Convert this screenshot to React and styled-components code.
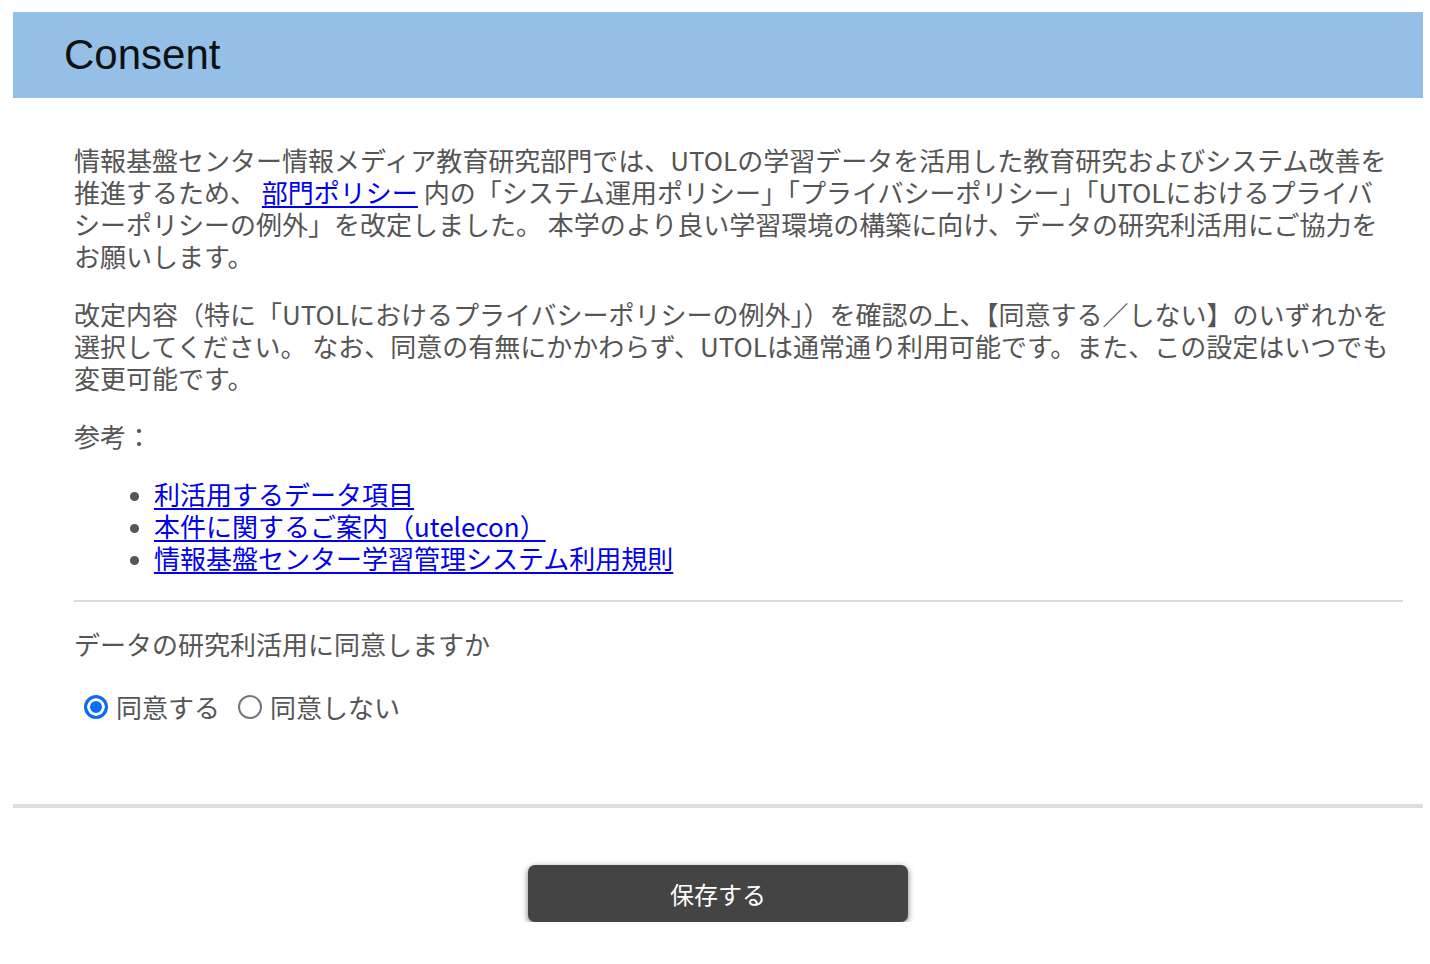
import { useState } from "react";
import styled, { createGlobalStyle } from "styled-components";

const GlobalStyle = createGlobalStyle`
  body {
    margin: 0;
    background: #fff;
    font-family: "Noto Sans CJK JP", "Noto Sans", sans-serif;
  }
`;

const links = [
  "利活用するデータ項目",
  "本件に関するご案内（utelecon）",
  "情報基盤センター学習管理システム利用規則",
];

export default function App() {
  const [agree, setAgree] = useState("yes");

  return (
    <>
      <GlobalStyle />
      <Page>
        <Header>
          <Title>Consent</Title>
        </Header>
        <Content>
          <Para>
            情報基盤センター情報メディア教育研究部門では、UTOLの学習データを活用した教育研究およびシステム改善を推進するため、{" "}
            <Link href="#">部門ポリシー</Link>{" "}
            内の「システム運用ポリシー」「プライバシーポリシー」「UTOLにおけるプライバシーポリシーの例外」を改定しました。
            本学のより良い学習環境の構築に向け、データの研究利活用にご協力をお願いします。
          </Para>
          <Para>
            改定内容（特に「UTOLにおけるプライバシーポリシーの例外」）を確認の上、【同意する／しない】のいずれかを選択してください。
            なお、同意の有無にかかわらず、UTOLは通常通り利用可能です。また、この設定はいつでも変更可能です。
          </Para>
          <Para>参考：</Para>
          <LinkList>
            {links.map((t) => (
              <li key={t}>
                <Link href="#">{t}</Link>
              </li>
            ))}
          </LinkList>
          <Rule />
          <Question>データの研究利活用に同意しますか</Question>
          <RadioRow>
            <Choice>
              <Radio
                type="radio"
                name="agree"
                checked={agree === "yes"}
                onChange={() => setAgree("yes")}
              />
              同意する
            </Choice>
            <Choice>
              <Radio
                type="radio"
                name="agree"
                checked={agree === "no"}
                onChange={() => setAgree("no")}
              />
              同意しない
            </Choice>
          </RadioRow>
        </Content>
        <Footer>
          <SaveButton>保存する</SaveButton>
        </Footer>
      </Page>
    </>
  );
}

const Page = styled.div`
  padding: 12px 7px 0 13px;
`;

const Header = styled.div`
  height: 86px;
  background: #94c0e8;
  display: flex;
  align-items: center;
  padding-left: 51px;
`;

const Title = styled.h1`
  margin: 0;
  font-family: "Liberation Sans", Arial, sans-serif;
  font-weight: 400;
  font-size: 42px;
  color: #111;
`;

const Content = styled.div`
  padding: 46px 20px 0 61px;
  color: #555;
  font-size: 26px;
  line-height: 32px;
`;

const Para = styled.p`
  margin: 0 10px 26px 0;
`;

const Link = styled.a`
  color: #0000ee;
  text-decoration: underline;
  text-underline-offset: 3px;
`;

const LinkList = styled.ul`
  margin: 0;
  padding-left: 80px;
  li::marker {
    color: #555;
    font-size: 22px;
  }
`;

const Rule = styled.div`
  height: 2px;
  background: #ddd;
  margin-top: 26px;
`;

const Question = styled.p`
  margin: 26px 0 0;
`;

const RadioRow = styled.div`
  display: flex;
  gap: 18px;
  margin: 31px 0 0 10px;
`;

const Choice = styled.label`
  display: flex;
  align-items: center;
  gap: 8px;
`;

const Radio = styled.input`
  appearance: none;
  margin: 0;
  width: 24px;
  height: 24px;
  border-radius: 50%;
  border: 2px solid #777;
  background: #fff;

  &:checked {
    border: 3px solid #0b6ff4;
    background: #0b6ff4;
    box-shadow: inset 0 0 0 3px #fff;
  }
`;

const Footer = styled.div`
  margin-top: 81px;
  border-top: 4px solid #ddd;
  padding-top: 57px;
  display: flex;
  justify-content: center;
`;

const SaveButton = styled.button`
  width: 380px;
  height: 57px;
  border: none;
  border-radius: 7px;
  background: #444;
  color: #fff;
  font-family: "Noto Sans CJK JP", sans-serif;
  font-size: 24px;
  box-shadow: 0 2px 6px rgba(0, 0, 0, 0.55);
`;
